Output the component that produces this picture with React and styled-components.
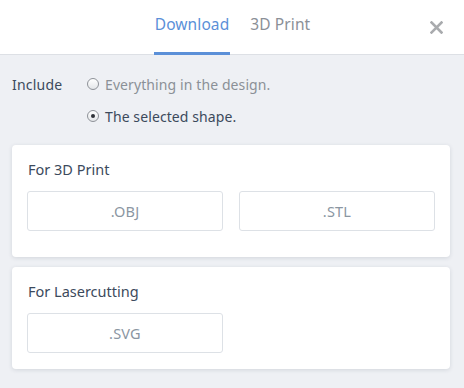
import React, { useState } from 'react';
import styled, { createGlobalStyle } from 'styled-components';

const Global = createGlobalStyle`
  html, body { margin: 0; padding: 0; }
  body {
    width: 464px;
    height: 388px;
    overflow: hidden;
    background: #eef0f4;
    font-family: "Noto Sans", "Open Sans", sans-serif;
  }
`;

const Panel = styled.div`
  width: 464px;
  height: 388px;
  background: #eef0f4;
  display: flex;
  flex-direction: column;
`;

const Header = styled.div`
  position: relative;
  height: 54px;
  background: #ffffff;
  border-bottom: 1px solid #dde0e5;
  display: flex;
  justify-content: center;
  gap: 19px;
  padding-left: 1px;
`;

const Tab = styled.div`
  display: flex;
  align-items: center;
  padding: 0 1px 5px;
  font-size: 15.5px;
  letter-spacing: 0.1px;
  color: ${p => (p.active ? '#5b90d8' : '#8b9097')};
  border-bottom: 3px solid ${p => (p.active ? '#5b90d8' : 'transparent')};
  margin-bottom: -1px;
  cursor: pointer;
`;

const Close = styled.button`
  position: absolute;
  right: 20px;
  top: 19px;
  width: 16px;
  height: 16px;
  padding: 0;
  border: none;
  background: none;
  display: flex;
  align-items: center;
  justify-content: center;
  cursor: pointer;
`;

const Body = styled.div`
  padding: 12px 14px 0 12px;
  display: flex;
  flex-direction: column;
  gap: 10px;
`;

const IncludeRow = styled.div`
  display: grid;
  grid-template-columns: 75px 1fr;
  margin-top: 1px;
  margin-bottom: 3px;
`;

const Label = styled.div`
  font-size: 14px;
  letter-spacing: 0.2px;
  color: #3c4a5c;
  height: 32px;
  display: flex;
  align-items: center;
`;

const Options = styled.div`
  display: flex;
  flex-direction: column;
`;

const Option = styled.label`
  height: 32px;
  display: flex;
  align-items: center;
  gap: 6px;
  font-size: 14px;
  letter-spacing: 0.1px;
  color: ${p => (p.checked ? '#3c4a5c' : '#8b9097')};
  cursor: pointer;
`;

const Radio = styled.span`
  width: 10px;
  height: 10px;
  border-radius: 50%;
  border: 1px solid #8e9298;
  background: linear-gradient(#ffffff, #e4e6e9);
  display: flex;
  align-items: center;
  justify-content: center;
  &::after {
    content: '';
    width: 4px;
    height: 4px;
    border-radius: 50%;
    background: ${p => (p.checked ? '#2f3238' : 'transparent')};
  }
`;

const Card = styled.div`
  background: #ffffff;
  border-radius: 4px;
  box-shadow: 0 1px 4px rgba(40, 55, 80, 0.14);
  padding: 15px 15px ${p => p.bottom}px 15px;
`;

const CardTitle = styled.div`
  font-size: 14.5px;
  color: #3c4a5c;
  padding-left: 1px;
  height: 18px;
  line-height: 18px;
  margin-bottom: 13px;
`;

const Formats = styled.div`
  display: grid;
  grid-template-columns: 196px 196px;
  gap: 16px;
`;

const FormatButton = styled.button`
  height: 40px;
  border: 1px solid #dde1e6;
  border-radius: 3px;
  background: #ffffff;
  font-family: inherit;
  font-size: 14.5px;
  letter-spacing: 0.2px;
  color: #8b96a2;
  cursor: pointer;
`;

const XIcon = () => (
  <svg width="13" height="13" viewBox="0 0 13 13">
    <path d="M1.5 1.5 L11.5 11.5 M11.5 1.5 L1.5 11.5" stroke="#a9abae" strokeWidth="2.6" strokeLinecap="square" />
  </svg>
);

export default function App() {
  const [tab, setTab] = useState('download');
  const [scope, setScope] = useState('selected');

  return (
    <Panel>
      <Global />
      <Header>
        <Tab active={tab === 'download'} onClick={() => setTab('download')}>Download</Tab>
        <Tab active={tab === 'print'} onClick={() => setTab('print')}>3D Print</Tab>
        <Close aria-label="Close"><XIcon /></Close>
      </Header>
      <Body>
        <IncludeRow>
          <Label>Include</Label>
          <Options>
            <Option checked={scope === 'all'} onClick={() => setScope('all')}>
              <Radio checked={scope === 'all'} />
              Everything in the design.
            </Option>
            <Option checked={scope === 'selected'} onClick={() => setScope('selected')}>
              <Radio checked={scope === 'selected'} />
              The selected shape.
            </Option>
          </Options>
        </IncludeRow>
        <Card bottom={26}>
          <CardTitle>For 3D Print</CardTitle>
          <Formats>
            <FormatButton>.OBJ</FormatButton>
            <FormatButton>.STL</FormatButton>
          </Formats>
        </Card>
        <Card bottom={16}>
          <CardTitle>For Lasercutting</CardTitle>
          <Formats>
            <FormatButton>.SVG</FormatButton>
          </Formats>
        </Card>
      </Body>
    </Panel>
  );
}
